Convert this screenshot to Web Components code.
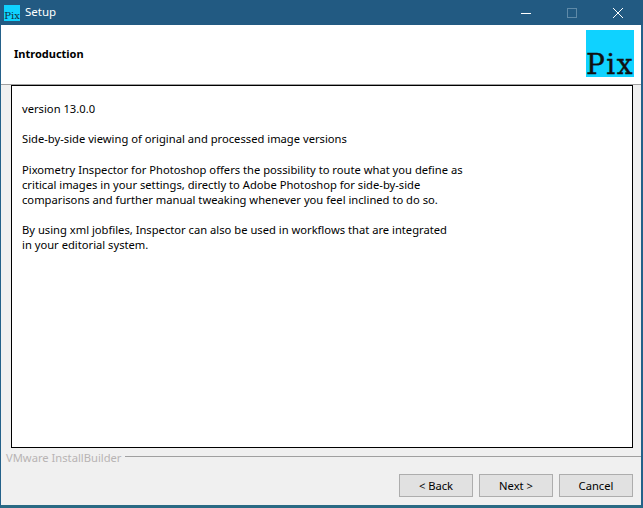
<!DOCTYPE html>
<html>
<head>
<meta charset="utf-8">
<title>Setup</title>
<style>
  html, body { margin: 0; padding: 0; height: 100%; overflow: hidden; }
  body { font: 11.2px "Noto Sans", sans-serif; color: #000; }
</style>
</head>
<body>
<setup-window>
  <title-bar slot="title">Setup</title-bar>
  <page-header slot="header">Introduction</page-header>
  <info-box>
    <p>version 13.0.0</p>
    <p class="wide">Side-by-side viewing of original and processed image versions</p>
    <p>Pixometry Inspector for Photoshop offers the possibility to route what you define as<br>critical images in your settings, directly to Adobe Photoshop for side-by-side<br>comparisons and further manual tweaking whenever you feel inclined to do so.</p>
    <p>By using xml jobfiles, Inspector can also be used in workflows that are integrated<br>in your editorial system.</p>
  </info-box>
  <footer-bar slot="footer">
    <wiz-button>&lt; Back</wiz-button>
    <wiz-button>Next &gt;</wiz-button>
    <wiz-button>Cancel</wiz-button>
  </footer-bar>
</setup-window>

<script>
class SetupWindow extends HTMLElement {
  connectedCallback() {
    this.attachShadow({ mode: 'open' });
    this.shadowRoot.innerHTML = `
      <style>
        :host {
          display: flex;
          flex-direction: column;
          height: 508px;
          box-sizing: border-box;
          background: #f0f0f0;
          border-left: 1px solid #24618a;
          border-right: 2px solid #24618a;
          border-bottom: 3px solid #2a6a84;
        }
        .main { flex: 1; display: flex; flex-direction: column; min-height: 0; padding: 0 8px 0 10px; }
      </style>
      <slot name="title"></slot>
      <slot name="header"></slot>
      <div class="main"><slot></slot></div>
      <slot name="footer"></slot>
    `;
  }
}

class TitleBar extends HTMLElement {
  connectedCallback() {
    this.attachShadow({ mode: 'open' });
    this.shadowRoot.innerHTML = `
      <style>
        :host {
          display: flex;
          align-items: center;
          height: 25px;
          margin: 0 -2px 0 -1px;
          padding-right: 2px;
          background: #225a82;
          color: #fff;
          font-size: 11.5px;
        }
        .icon {
          width: 16px; height: 16px;
          margin: 0 5px 0 4px;
          background: #0fd2ff;
          color: #10303c;
          font: 10px/21px "DejaVu Serif", serif;
          overflow: hidden;
          text-align: center;
        }
        .label { flex: 1; padding-bottom: 2px; }
        .ctl { width: 46px; height: 25px; display: flex; align-items: center; justify-content: center; }
        svg { display: block; }
      </style>
      <div class="icon">Pix</div>
      <div class="label"><slot></slot></div>
      <div class="ctl"><svg width="10" height="10"><path d="M0 5.5H10" stroke="#fff"/></svg></div>
      <div class="ctl"><svg width="10" height="10"><rect x=".5" y=".5" width="9" height="9" fill="none" stroke="#5f8aa8"/></svg></div>
      <div class="ctl"><svg width="10" height="10"><path d="M0 0L10 10M10 0L0 10" stroke="#fff"/></svg></div>
    `;
  }
}

class PageHeader extends HTMLElement {
  connectedCallback() {
    this.attachShadow({ mode: 'open' });
    this.shadowRoot.innerHTML = `
      <style>
        :host {
          display: flex;
          align-items: center;
          justify-content: space-between;
          height: 59px;
          padding: 0 7px 0 13px;
          background: #fff;
          border-bottom: 1px solid #a0a0a0;
        }
        .title { font-weight: bold; font-size: 11px; padding-bottom: 2px; }
        .logo {
          width: 48px; height: 47px;
          margin-bottom: 2px;
          background: #0fd2ff;
          font: 28px/24px "DejaVu Serif", serif;
          letter-spacing: 1.5px;
          -webkit-text-stroke: .4px #111;
          color: #111;
          display: flex;
          align-items: flex-end;
          justify-content: center;
        }
      </style>
      <div class="title"><slot></slot></div>
      <div class="logo">Pix</div>
    `;
  }
}

class InfoBox extends HTMLElement {
  connectedCallback() {
    this.attachShadow({ mode: 'open' });
    this.shadowRoot.innerHTML = `
      <style>
        :host {
          display: block;
          flex: 1;
          box-sizing: border-box;
          background: #fff;
          border: 1px solid #000;
          padding: 15px 10px;
          line-height: 15px;
        }
        ::slotted(p) { margin: 0 0 15px; }
        ::slotted(p.wide) { margin-bottom: 16px; }
      </style>
      <slot></slot>
    `;
  }
}

class FooterBar extends HTMLElement {
  connectedCallback() {
    this.attachShadow({ mode: 'open' });
    this.shadowRoot.innerHTML = `
      <style>
        :host { display: block; height: 57px; }
        .brand { display: flex; align-items: center; gap: 4px; height: 19px; padding: 0 0 0 5px; color: #b8b4b4; }
        .rule { flex: 1; height: 1px; margin-bottom: 3px; background: #a0a0a0; }
        .buttons { display: flex; justify-content: flex-end; gap: 6px; padding: 7px 8px 0 0; }
      </style>
      <div class="brand"><span>VMware InstallBuilder</span><div class="rule"></div></div>
      <div class="buttons"><slot></slot></div>
    `;
  }
}

class WizButton extends HTMLElement {
  connectedCallback() {
    this.attachShadow({ mode: 'open' });
    this.shadowRoot.innerHTML = `
      <style>
        :host {
          display: flex;
          align-items: center;
          justify-content: center;
          box-sizing: border-box;
          width: 74px;
          height: 23px;
          background: #e1e1e1;
          border: 1px solid #adadad;
        }
      </style>
      <slot></slot>
    `;
  }
}

customElements.define('setup-window', SetupWindow);
customElements.define('title-bar', TitleBar);
customElements.define('page-header', PageHeader);
customElements.define('info-box', InfoBox);
customElements.define('footer-bar', FooterBar);
customElements.define('wiz-button', WizButton);
</script>
</body>
</html>
